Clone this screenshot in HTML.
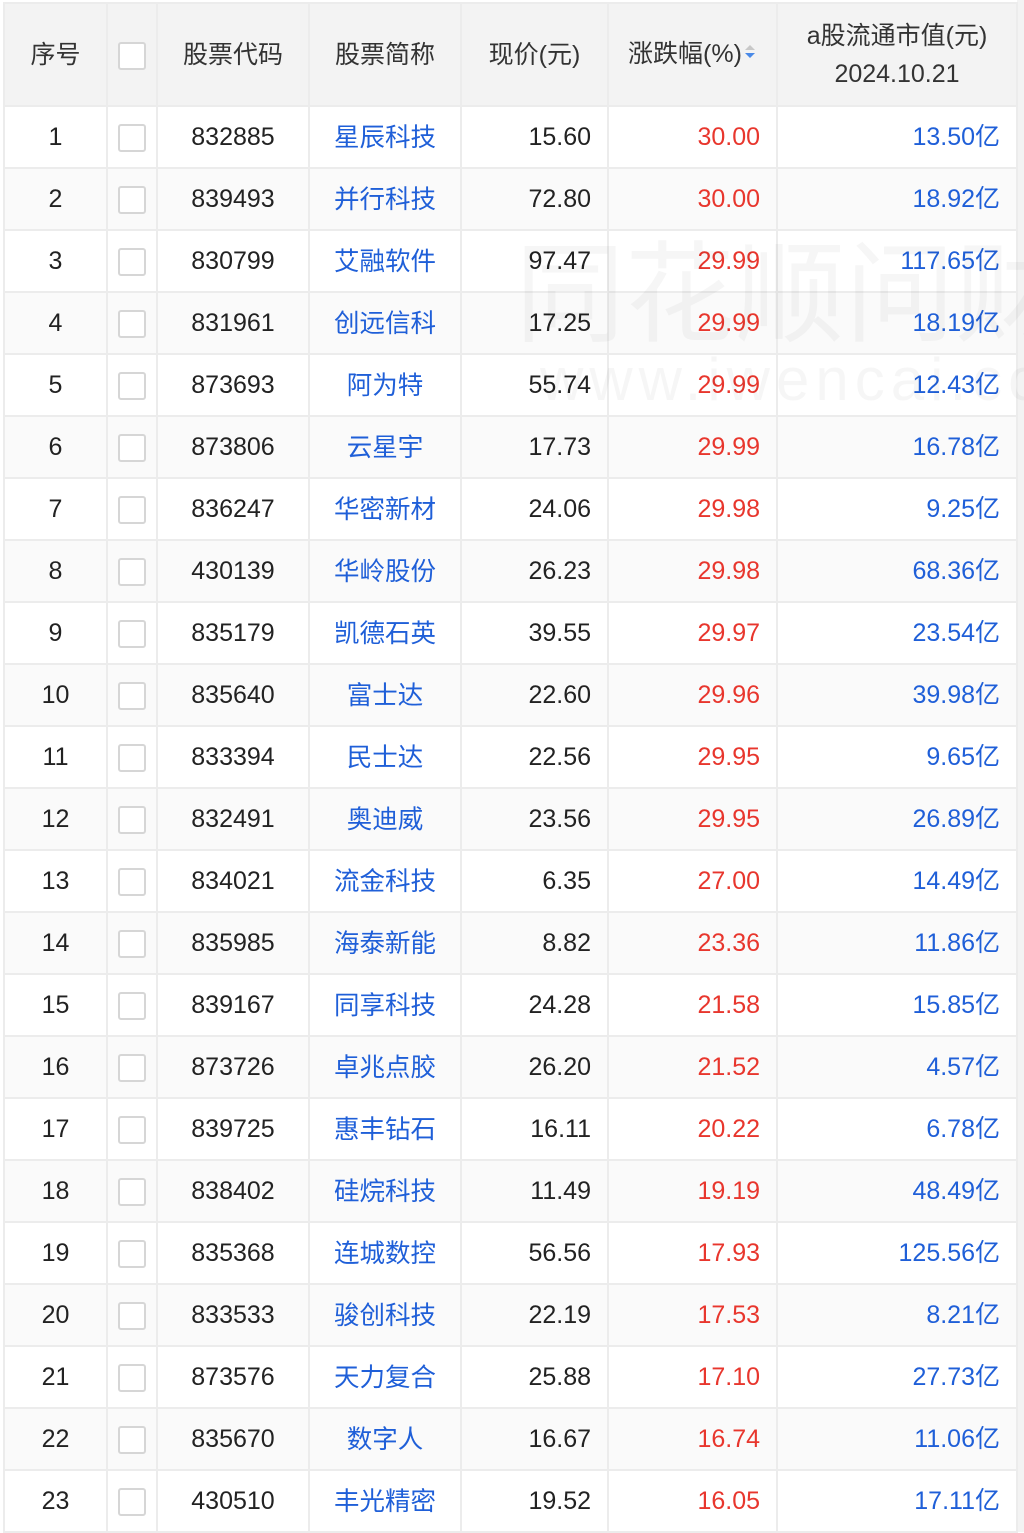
<!DOCTYPE html><html><head><meta charset="utf-8"><style>
body{margin:0;width:1024px;height:1532px;overflow:hidden;background:#fff;font-family:"Liberation Sans","Noto Sans CJK SC",sans-serif;position:relative}
table{position:absolute;left:3px;top:2px;border-collapse:collapse;table-layout:fixed;width:1013px;font-size:25px;color:#222}
td,th{border:2px solid #ececec;padding:0;white-space:nowrap;overflow:hidden;line-height:60px}
th{height:101px;background:#f3f3f3;font-weight:normal;color:#333;line-height:38px}
td{height:60px}
tr:nth-child(odd) td{background:#fafafa}
.c{text-align:center}.r{text-align:right;padding-right:16px}
.b{color:#1f5fd8}.red{color:#e8362d}
.n{font-family:"Noto Sans CJK SC",sans-serif;font-size:25.5px}
.n span{display:inline-block;line-height:30px;vertical-align:middle;position:relative;top:-4px}
.cb{display:inline-block;width:24px;height:24px;border:2px solid #d6d6d6;border-radius:3px;background:#fff;vertical-align:middle}
.wm{position:absolute;left:515px;top:220px;font-size:110px;line-height:130px;color:rgba(0,0,0,0.035);white-space:nowrap;z-index:2;font-family:"Noto Sans CJK SC",sans-serif}
.wm2{position:absolute;left:540px;top:345px;font-size:60px;color:rgba(0,0,0,0.035);letter-spacing:6px;white-space:nowrap;z-index:2}
.strip{position:absolute;left:1017px;top:0;width:7px;height:1532px;background:#f3f3f3}
</style></head><body>
<div class="strip"></div>
<table>
<colgroup><col style="width:103px"><col style="width:50px"><col style="width:152px"><col style="width:152px"><col style="width:147px"><col style="width:169px"><col style="width:240px"></colgroup>
<tr><th>序号</th><th><span class="cb"></span></th><th>股票代码</th><th>股票简称</th><th>现价(元)</th><th>涨跌幅(%)<span style="display:inline-block;vertical-align:middle;margin-left:1px"><svg width="14" height="22" viewBox="0 0 14 22"><path d="M2 9L7 4L12 9Z" fill="#c8c8c8"/><path d="M2 12L7 17L12 12Z" fill="#4a8ae8"/></svg></span></th><th>a股流通市值(元)<br>2024.10.21</th></tr>
<tr><td class="c">1</td><td class="c"><span class="cb"></span></td><td class="c">832885</td><td class="c b n"><span>星辰科技</span></td><td class="r">15.60</td><td class="r red">30.00</td><td class="r b">13.50亿</td></tr>
<tr><td class="c">2</td><td class="c"><span class="cb"></span></td><td class="c">839493</td><td class="c b n"><span>并行科技</span></td><td class="r">72.80</td><td class="r red">30.00</td><td class="r b">18.92亿</td></tr>
<tr><td class="c">3</td><td class="c"><span class="cb"></span></td><td class="c">830799</td><td class="c b n"><span>艾融软件</span></td><td class="r">97.47</td><td class="r red">29.99</td><td class="r b">117.65亿</td></tr>
<tr><td class="c">4</td><td class="c"><span class="cb"></span></td><td class="c">831961</td><td class="c b n"><span>创远信科</span></td><td class="r">17.25</td><td class="r red">29.99</td><td class="r b">18.19亿</td></tr>
<tr><td class="c">5</td><td class="c"><span class="cb"></span></td><td class="c">873693</td><td class="c b n"><span>阿为特</span></td><td class="r">55.74</td><td class="r red">29.99</td><td class="r b">12.43亿</td></tr>
<tr><td class="c">6</td><td class="c"><span class="cb"></span></td><td class="c">873806</td><td class="c b n"><span>云星宇</span></td><td class="r">17.73</td><td class="r red">29.99</td><td class="r b">16.78亿</td></tr>
<tr><td class="c">7</td><td class="c"><span class="cb"></span></td><td class="c">836247</td><td class="c b n"><span>华密新材</span></td><td class="r">24.06</td><td class="r red">29.98</td><td class="r b">9.25亿</td></tr>
<tr><td class="c">8</td><td class="c"><span class="cb"></span></td><td class="c">430139</td><td class="c b n"><span>华岭股份</span></td><td class="r">26.23</td><td class="r red">29.98</td><td class="r b">68.36亿</td></tr>
<tr><td class="c">9</td><td class="c"><span class="cb"></span></td><td class="c">835179</td><td class="c b n"><span>凯德石英</span></td><td class="r">39.55</td><td class="r red">29.97</td><td class="r b">23.54亿</td></tr>
<tr><td class="c">10</td><td class="c"><span class="cb"></span></td><td class="c">835640</td><td class="c b n"><span>富士达</span></td><td class="r">22.60</td><td class="r red">29.96</td><td class="r b">39.98亿</td></tr>
<tr><td class="c">11</td><td class="c"><span class="cb"></span></td><td class="c">833394</td><td class="c b n"><span>民士达</span></td><td class="r">22.56</td><td class="r red">29.95</td><td class="r b">9.65亿</td></tr>
<tr><td class="c">12</td><td class="c"><span class="cb"></span></td><td class="c">832491</td><td class="c b n"><span>奥迪威</span></td><td class="r">23.56</td><td class="r red">29.95</td><td class="r b">26.89亿</td></tr>
<tr><td class="c">13</td><td class="c"><span class="cb"></span></td><td class="c">834021</td><td class="c b n"><span>流金科技</span></td><td class="r">6.35</td><td class="r red">27.00</td><td class="r b">14.49亿</td></tr>
<tr><td class="c">14</td><td class="c"><span class="cb"></span></td><td class="c">835985</td><td class="c b n"><span>海泰新能</span></td><td class="r">8.82</td><td class="r red">23.36</td><td class="r b">11.86亿</td></tr>
<tr><td class="c">15</td><td class="c"><span class="cb"></span></td><td class="c">839167</td><td class="c b n"><span>同享科技</span></td><td class="r">24.28</td><td class="r red">21.58</td><td class="r b">15.85亿</td></tr>
<tr><td class="c">16</td><td class="c"><span class="cb"></span></td><td class="c">873726</td><td class="c b n"><span>卓兆点胶</span></td><td class="r">26.20</td><td class="r red">21.52</td><td class="r b">4.57亿</td></tr>
<tr><td class="c">17</td><td class="c"><span class="cb"></span></td><td class="c">839725</td><td class="c b n"><span>惠丰钻石</span></td><td class="r">16.11</td><td class="r red">20.22</td><td class="r b">6.78亿</td></tr>
<tr><td class="c">18</td><td class="c"><span class="cb"></span></td><td class="c">838402</td><td class="c b n"><span>硅烷科技</span></td><td class="r">11.49</td><td class="r red">19.19</td><td class="r b">48.49亿</td></tr>
<tr><td class="c">19</td><td class="c"><span class="cb"></span></td><td class="c">835368</td><td class="c b n"><span>连城数控</span></td><td class="r">56.56</td><td class="r red">17.93</td><td class="r b">125.56亿</td></tr>
<tr><td class="c">20</td><td class="c"><span class="cb"></span></td><td class="c">833533</td><td class="c b n"><span>骏创科技</span></td><td class="r">22.19</td><td class="r red">17.53</td><td class="r b">8.21亿</td></tr>
<tr><td class="c">21</td><td class="c"><span class="cb"></span></td><td class="c">873576</td><td class="c b n"><span>天力复合</span></td><td class="r">25.88</td><td class="r red">17.10</td><td class="r b">27.73亿</td></tr>
<tr><td class="c">22</td><td class="c"><span class="cb"></span></td><td class="c">835670</td><td class="c b n"><span>数字人</span></td><td class="r">16.67</td><td class="r red">16.74</td><td class="r b">11.06亿</td></tr>
<tr><td class="c">23</td><td class="c"><span class="cb"></span></td><td class="c">430510</td><td class="c b n"><span>丰光精密</span></td><td class="r">19.52</td><td class="r red">16.05</td><td class="r b">17.11亿</td></tr>
</table>
<div class="wm">同花顺问财</div>
<div class="wm2">www.iwencai.com</div>
</body></html>
